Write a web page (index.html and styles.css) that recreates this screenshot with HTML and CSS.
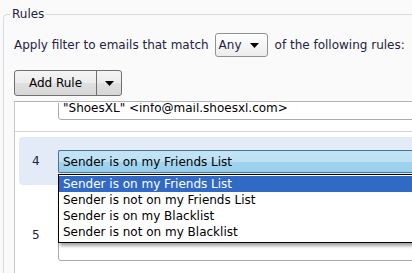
FILE: index.html
```html
<!DOCTYPE html>
<html lang="en">
<head>
    <meta charset="UTF-8">
    <meta name="viewport" content="width=device-width, initial-scale=1.0">
    <title>Rules</title>
    <link rel="stylesheet" href="styles.css">
</head>
<body>

    <fieldset class="rules">
        <legend>Rules</legend>

        <div class="filter-line">
            <span>Apply filter to emails that match</span>
            <div class="combo">
                <span>Any</span>
                <svg class="arrow" width="9" height="5" viewBox="0 0 9 5"><path d="M0 0H9L4.5 5Z" fill="#000"/></svg>
            </div>
            <span>of the following rules:</span>
        </div>

        <div class="split-button">
            <button type="button" class="split-main">Add Rule</button>
            <button type="button" class="split-arrow">
                <svg width="9" height="5" viewBox="0 0 9 5"><path d="M0 0H9L4.5 5Z" fill="#000"/></svg>
            </button>
        </div>

        <div class="rule-list">
            <div class="rule-scroll">
                <div class="rule rule-prev">
                    <div class="rule-box">"ShoesXL" &lt;info@mail.shoesxl.com&gt;</div>
                </div>

                <div class="rule rule-active">
                    <span class="rule-num">4</span>
                    <div class="rule-select">
                        <div class="rule-select-value">Sender is on my Friends List</div>
                        <ul class="rule-options">
                            <li class="selected">Sender is on my Friends List</li>
                            <li>Sender is not on my Friends List</li>
                            <li>Sender is on my Blacklist</li>
                            <li>Sender is not on my Blacklist</li>
                        </ul>
                    </div>
                </div>

                <div class="rule rule-next">
                    <span class="rule-num">5</span>
                    <div class="rule-box rule-box-tall"></div>
                </div>
            </div>
        </div>
    </fieldset>

</body>
</html>
```

FILE: styles.css
```css
body {
    margin: 0;
    background-color: #fafafa;
    font-family: 'DejaVu Sans', Verdana, sans-serif;
    font-size: 12px;
    line-height: 16px;
    color: #1e2440;
    overflow: hidden;
    height: 273px;
}
.rules {
    margin: 6px 0 0 3px;
    padding: 11px 0 0 10px;
    width: 430px;
    border: 1px solid #d3dce3;
    border-radius: 4px;
    min-width: 0;
}
.rules legend {
    margin-left: -4px;
    padding: 0 2px;
}

/* Linea de filtro */
.filter-line {
    display: flex;
    align-items: center;
    height: 24px;
}
.combo {
    display: flex;
    align-items: center;
    box-sizing: border-box;
    width: 53px;
    height: 24px;
    margin: 0 7px 0 6px;
    padding: 0 0 0 3px;
    border: 1px solid #8f9193;
    border-radius: 3px;
    background: linear-gradient(#ffffff, #ececec);
}
.combo .arrow {
    margin-left: 8px;
}

/* Boton dividido */
.split-button {
    display: inline-flex;
    margin-top: 13px;
    height: 26px;
    box-sizing: border-box;
    border: 1px solid #707070;
    border-radius: 3px;
    background: linear-gradient(#f4f4f4 0%, #ececec 50%, #e0e0e0 51%, #d6d6d6 100%);
}
.split-button button {
    font: inherit;
    color: #000;
    border: none;
    background: transparent;
    padding: 0;
    margin: 0;
}
.split-main {
    width: 82px;
    border-right: 1px solid #707070 !important;
}
.split-arrow {
    width: 24px;
    display: flex;
    align-items: center;
    justify-content: center;
}

/* Lista de reglas */
.rule-list {
    margin-top: 5px;
    border-top: 1px solid #b4b4b4;
    border-left: 1px solid #c8c8c8;
    background-color: #fff;
    height: 180px;
}
.rule-scroll {
    margin-top: 1px;
    height: 179px;
    overflow: hidden;
}
.rule {
    display: flex;
    align-items: center;
}
.rule-num {
    width: 26px;
    padding-left: 13px;
    color: #1e2440;
}
.rule-box {
    flex: 1;
    background-color: #fff;
    border: 1px solid #ababab;
    border-radius: 3px;
    color: #000;
}
.rule-prev {
    align-items: flex-end;
    height: 28px;
    padding-left: 43px;
    border-bottom: 1px solid #d4d4d4;
}
.rule-prev .rule-box {
    height: 40px;
    margin-bottom: 11px;
    box-sizing: border-box;
    padding: 0 0 3px 4px;
    display: flex;
    align-items: flex-end;
    white-space: nowrap;
}
.rule-active {
    margin: 5px 0 0 4px;
    height: 48px;
    border-radius: 4px;
    background-color: #e3ebf8;
}
.rule-select {
    position: relative;
    flex: 1;
}
.rule-select-value {
    box-sizing: border-box;
    height: 23px;
    padding: 3px 0 0 4px;
    border: 1px solid #4a7396;
    border-right: none;
    border-radius: 2px 0 0 2px;
    background: linear-gradient(#c3e4f6 0%, #bde1f4 50%, #a2d4ee 52%, #98cfeb 100%);
    color: #000;
}
.rule-options {
    position: absolute;
    top: 24px;
    left: 0;
    right: -20px;
    margin: 0;
    padding: 1px 0 2px;
    list-style: none;
    background-color: #fff;
    border: 1px solid #000;
    box-shadow: 2px 3px 3px rgba(0, 0, 0, 0.35);
    z-index: 10;
}
.rule-options li {
    height: 16px;
    padding-left: 4px;
    color: #000;
}
.rule-options li.selected {
    background-color: #316ac5;
    color: #fff;
}
.rule-next {
    padding-top: 23px;
}
.rule-next .rule-num {
    padding-left: 17px;
}
.rule-box-tall {
    height: 51px;
}
```
